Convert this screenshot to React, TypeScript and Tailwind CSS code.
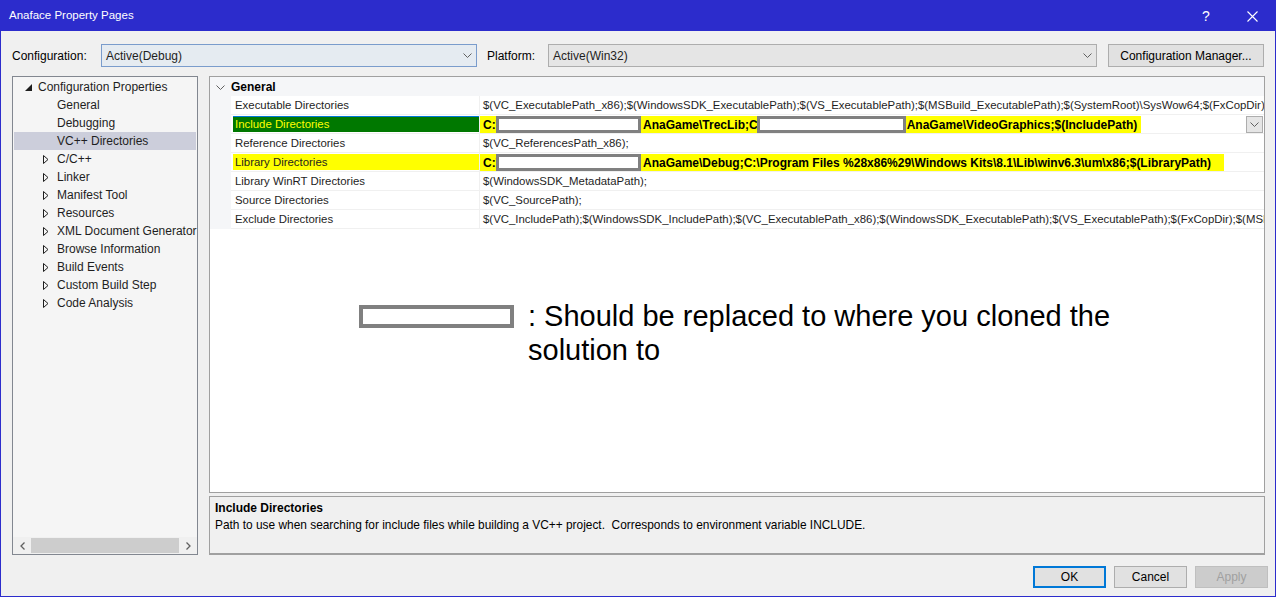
import type { ReactNode } from "react";

const Chevron = ({ className = "" }: { className?: string }) => (
  <svg width="9" height="5" viewBox="0 0 9 5" className={className}>
    <path d="M0.5 0.5 L4.5 4.5 L8.5 0.5" fill="none" stroke="#606060" strokeWidth="1" />
  </svg>
);

const Collapsed = () => (
  <svg width="6" height="9" viewBox="0 0 6 9">
    <polygon points="0.5,0.5 5,4.5 0.5,8.5" fill="none" stroke="#1e1e1e" strokeWidth="1" />
  </svg>
);

const Expanded = () => (
  <svg width="7" height="7" viewBox="0 0 7 7">
    <polygon points="7,0 7,7 0,7" fill="#1e1e1e" />
  </svg>
);

const Redacted = ({ w, className = "" }: { w: string; className?: string }) => (
  <span
    className={`inline-block h-[17px] border-[3px] border-[#808080] bg-white align-middle ${w} ${className}`}
  />
);

const treeItems = [
  "C/C++",
  "Linker",
  "Manifest Tool",
  "Resources",
  "XML Document Generator",
  "Browse Information",
  "Build Events",
  "Custom Build Step",
  "Code Analysis",
];

const Row = ({
  name,
  children,
  nameClass = "",
  nameWrap,
  extra,
}: {
  name: string;
  children: ReactNode;
  nameClass?: string;
  nameWrap?: string;
  extra?: ReactNode;
}) => (
  <div className="flex h-[19px] border-b border-[#f0f0f0]">
    <div className="relative flex w-[249px] shrink-0 border-r border-[#f0f0f0] pl-[2px]">
      <div className={`flex flex-1 items-center pl-[2px] pt-[1px] ${nameWrap ?? ""}`}>
        <span className={nameClass}>{name}</span>
      </div>
    </div>
    <div className="relative flex min-w-0 flex-1 items-center overflow-hidden whitespace-nowrap pt-[1px]">
      {children}
      {extra}
    </div>
  </div>
);

export default function App() {
  return (
    <div className="flex h-[597px] w-[1276px] flex-col overflow-hidden border border-[#2c2ccc] bg-[#f0f0f0] font-['Liberation_Sans',Arial,sans-serif] text-[12px] text-[#1e1e1e]">
      {/* title bar */}
      <div className="flex h-[30px] shrink-0 items-center bg-[#2c2ccc] pl-[8px] text-white">
        <span className="flex-1 text-[11.5px]">Anaface Property Pages</span>
        <div className="flex w-[46px] justify-center text-[14px]">?</div>
        <div className="flex w-[46px] justify-center">
          <svg width="11" height="11" viewBox="0 0 11 11">
            <path d="M0.5 0.5 L10.5 10.5 M10.5 0.5 L0.5 10.5" stroke="white" strokeWidth="1.1" />
          </svg>
        </div>
      </div>

      <div className="flex flex-1 flex-col pl-[11px] pr-[10px]">
        {/* configuration row */}
        <div className="mt-[13px] flex h-[23px] items-center">
          <span className="w-[89px] text-black">Configuration:</span>
          <div className="flex h-full w-[376px] items-center border border-[#7a9ccc] bg-[#e5ebf1] pl-[4px] pr-[4px]">
            <span className="flex-1">Active(Debug)</span>
            <Chevron />
          </div>
          <span className="ml-[10px] w-[61px] text-black">Platform:</span>
          <div className="flex h-full w-[549px] items-center border border-[#adadad] bg-[#e5e5e5] pl-[4px] pr-[4px]">
            <span className="flex-1">Active(Win32)</span>
            <Chevron />
          </div>
          <button className="ml-[11px] flex h-full w-[156px] items-center justify-center border border-[#adadad] bg-[#e1e1e1] text-black">
            Configuration Manager...
          </button>
        </div>

        {/* main area */}
        <div className="mt-[9px] flex h-[479px] gap-[11px]">
          {/* tree */}
          <div className="flex w-[186px] shrink-0 flex-col border border-[#828790] bg-[#f5f5f5]">
            <div className="flex-1 pt-[1px]">
              <div className="flex h-[18px] items-center">
                <div className="flex w-[25px] justify-end pr-[6px]">
                  <Expanded />
                </div>
                <span>Configuration Properties</span>
              </div>
              <div className="flex h-[18px] items-center pl-[44px]">General</div>
              <div className="flex h-[18px] items-center pl-[44px]">Debugging</div>
              <div className="mx-[1px] flex h-[18px] items-center bg-[#cccedb] pl-[43px]">
                VC++ Directories
              </div>
              {treeItems.map((t) => (
                <div key={t} className="flex h-[18px] items-center">
                  <div className="flex w-[44px] justify-end pr-[8px]">
                    <Collapsed />
                  </div>
                  <span className="whitespace-nowrap">{t}</span>
                </div>
              ))}
            </div>
            <div className="flex h-[17px] items-center bg-[#f0f0f0]">
              <div className="flex w-[18px] justify-center">
                <svg width="5" height="8" viewBox="0 0 5 8">
                  <path d="M4.5 0.5 L1 4 L4.5 7.5" fill="none" stroke="#606060" strokeWidth="1.3" />
                </svg>
              </div>
              <div className="h-[15px] w-[148px] bg-[#cdcdcd]" />
              <div className="flex flex-1 justify-center">
                <svg width="5" height="8" viewBox="0 0 5 8">
                  <path d="M0.5 0.5 L4 4 L0.5 7.5" fill="none" stroke="#606060" strokeWidth="1.3" />
                </svg>
              </div>
            </div>
          </div>

          {/* right column */}
          <div className="flex min-w-0 flex-1 flex-col gap-[3px]">
            <div className="flex h-[417px] flex-col overflow-hidden border border-[#a0a0a0] bg-white">
              <div className="flex h-[19px] shrink-0 items-center bg-[#f5f6f8] pt-[1px]">
                <div className="flex w-[21px] justify-center">
                  <Chevron />
                </div>
                <span className="font-bold text-black">General</span>
              </div>
              <div className="flex text-[11.4px]">
                <div className="w-[21px] shrink-0 bg-[#f5f6f8]" />
                <div className="min-w-0 flex-1">
                  <Row name="Executable Directories">
                    <span className="pl-[3px]">
                      $(VC_ExecutablePath_x86);$(WindowsSDK_ExecutablePath);$(VS_ExecutablePath);$(MSBuild_ExecutablePath);$(SystemRoot)\SysWow64;$(FxCopDir);$(PATH);
                    </span>
                  </Row>
                  <Row
                    name="Include Directories"
                    nameWrap="my-[1px] bg-[#007800] border-t border-[#0078d7]"
                    nameClass="text-[#ffff00]"
                    extra={
                      <div className="absolute right-[1px] top-[1px] flex h-[17px] w-[17px] items-center justify-center border border-[#adadad] bg-[#e5e5e5]">
                        <Chevron />
                      </div>
                    }
                  >
                    <span className="flex h-[17px] items-center bg-[#ffff00] pl-[3px] pr-[4px] text-[12px] font-bold text-black">
                      C:\
                      <Redacted w="w-[145px]" className="-ml-[3px]" />
                      <span className="ml-[2px]">AnaGame\TrecLib;C:</span>
                      <Redacted w="w-[149px]" className="-ml-[5px]" />
                      <span className="ml-[1px]">AnaGame\VideoGraphics;$(IncludePath)</span>
                    </span>
                  </Row>
                  <Row name="Reference Directories">
                    <span className="pl-[3px]">$(VC_ReferencesPath_x86);</span>
                  </Row>
                  <Row name="Library Directories" nameWrap="my-[1px] bg-[#ffff00]">
                    <span className="flex h-[17px] items-center bg-[#ffff00] pl-[3px] pr-[13px] text-[12px] font-bold text-black">
                      C:\
                      <Redacted w="w-[145px]" className="-ml-[3px]" />
                      <span className="ml-[2px]">
                        AnaGame\Debug;C:\Program Files %28x86%29\Windows Kits\8.1\Lib\winv6.3\um\x86;$(LibraryPath)
                      </span>
                    </span>
                  </Row>
                  <Row name="Library WinRT Directories">
                    <span className="pl-[3px]">$(WindowsSDK_MetadataPath);</span>
                  </Row>
                  <Row name="Source Directories">
                    <span className="pl-[3px]">$(VC_SourcePath);</span>
                  </Row>
                  <Row name="Exclude Directories">
                    <span className="pl-[3px]">
                      $(VC_IncludePath);$(WindowsSDK_IncludePath);$(VC_ExecutablePath_x86);$(WindowsSDK_ExecutablePath);$(VS_ExecutablePath);$(FxCopDir);$(MSBuild_ExecutablePath);
                    </span>
                  </Row>
                </div>
              </div>

              {/* annotation */}
              <div className="mt-[70px] flex items-start pl-[149px]">
                <span className="mt-[6px] h-[23px] w-[155px] shrink-0 border-4 border-[#808080] bg-white" />
                <p className="ml-[14px] text-[29px] leading-[34px] text-black">
                  : Should be replaced to where you cloned the
                  <br />
                  solution to
                </p>
              </div>
            </div>

            <div className="h-[59px] shrink-0 border border-b-2 border-[#a0a0a0] bg-[#f0f0f0] px-[5px] pt-[2px]">
              <div className="flex h-[18px] items-center font-bold text-black">Include Directories</div>
              <div className="flex h-[18px] items-center text-[11.9px] text-black">
                Path to use when searching for include files while building a VC++ project.&nbsp; Corresponds to environment variable INCLUDE.
              </div>
            </div>
          </div>
        </div>

        {/* buttons */}
        <div className="-mr-[3px] mt-[11px] flex h-[22px] justify-end gap-[8px]">
          <button className="w-[73px] border-2 border-[#0078d7] bg-[#e1e1e1] text-black">OK</button>
          <button className="w-[73px] border border-[#adadad] bg-[#e1e1e1] text-black">Cancel</button>
          <button className="w-[73px] border border-[#bfbfbf] bg-[#cccccc] text-[#a0a0a0]">Apply</button>
        </div>
      </div>
    </div>
  );
}
